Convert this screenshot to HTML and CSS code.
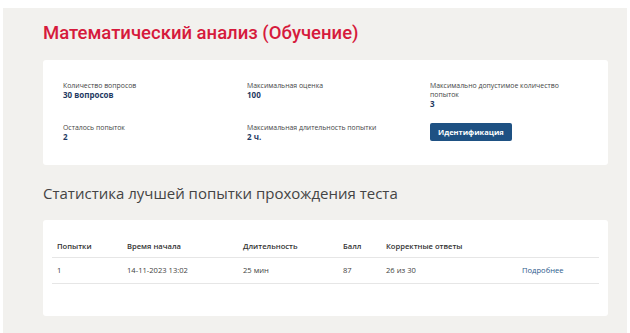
FILE: index.html
```html
<!DOCTYPE html>
<html lang="ru">
<head>
    <meta charset="UTF-8">
    <meta name="viewport" content="width=device-width, initial-scale=1.0">
    <title>Математический анализ</title>
    <link rel="stylesheet" href="styles.css">
</head>
<body>
    <div class="page">
        <h1 class="title">Математический анализ (Обучение)</h1>

        <div class="card info">
            <div class="info-grid">
                <div class="field">
                    <div class="label">Количество вопросов</div>
                    <div class="value">30 вопросов</div>
                </div>
                <div class="field">
                    <div class="label">Максимальная оценка</div>
                    <div class="value">100</div>
                </div>
                <div class="field">
                    <div class="label narrow">Максимально допустимое количество попыток</div>
                    <div class="value">3</div>
                </div>
                <div class="field">
                    <div class="label">Осталось попыток</div>
                    <div class="value">2</div>
                </div>
                <div class="field">
                    <div class="label">Максимальная длительность попытки</div>
                    <div class="value">2 ч.</div>
                </div>
                <div class="field">
                    <button class="btn">Идентификация</button>
                </div>
            </div>
        </div>

        <h2 class="subtitle">Статистика лучшей попытки прохождения теста</h2>

        <div class="card stats">
            <table class="table">
                <thead>
                    <tr>
                        <th class="c1">Попытки</th>
                        <th class="c2">Время начала</th>
                        <th class="c3">Длительность</th>
                        <th class="c4">Балл</th>
                        <th class="c5">Корректные ответы</th>
                        <th></th>
                    </tr>
                </thead>
                <tbody>
                    <tr>
                        <td>1</td>
                        <td>14-11-2023 13:02</td>
                        <td>25 мин</td>
                        <td>87</td>
                        <td>26 из 30</td>
                        <td><a href="#" class="link">Подробнее</a></td>
                    </tr>
                </tbody>
            </table>
        </div>
    </div>
</body>
</html>
```

FILE: styles.css
```css
body {
    margin: 0;
    padding: 8px 3px 0;
    font-family: "Open Sans", "Noto Sans", sans-serif;
    background-color: #ffffff;
}

.page {
    background-color: #f2f1ee;
    padding: 12px 19px 17px 40px;
    min-height: 296px;
}

.title {
    margin: 0 0 14px;
    font-family: Roboto, "Open Sans", sans-serif;
    font-size: 18.5px;
    font-weight: 500;
    line-height: 26px;
    color: #d61a3c;
}

.card {
    background-color: #ffffff;
    border-radius: 3px;
}

.info {
    padding: 21px 20px 23px;
}

.info-grid {
    display: grid;
    grid-template-columns: 184px 183px 1fr;
    row-gap: 14px;
}

.label {
    font-size: 6.9px;
    line-height: 9px;
    color: #444;
}

.label.narrow {
    max-width: 140px;
}

.value {
    font-size: 8px;
    line-height: 10px;
    font-weight: 700;
    color: #1f3a63;
}

.btn {
    display: block;
    height: 18px;
    padding: 0 8px;
    font-family: inherit;
    font-size: 7.5px;
    font-weight: 700;
    color: #fff;
    background-color: #1e5183;
    border: none;
    border-radius: 2px;
    cursor: pointer;
}

.subtitle {
    margin: 17px 0 16px;
    font-size: 15px;
    font-weight: 400;
    line-height: 22px;
    color: #444;
}

.stats {
    padding: 16px 9px 32px;
}

.table {
    width: 100%;
    border-collapse: collapse;
    font-size: 7.6px;
    color: #444;
}

.table th {
    text-align: left;
    font-weight: 600;
    color: #333;
    padding: 5px 5px 6px;
    border-bottom: 1px solid #e6e6e6;
}

.table td {
    padding: 7px 5px 8px;
    border-bottom: 1px solid #e6e6e6;
}

.c1 { width: 60px; }
.c2 { width: 106px; }
.c3 { width: 90px; }
.c4 { width: 33px; }
.c5 { width: 126px; }

.link {
    color: #2d5b8c;
    text-decoration: none;
}
```
